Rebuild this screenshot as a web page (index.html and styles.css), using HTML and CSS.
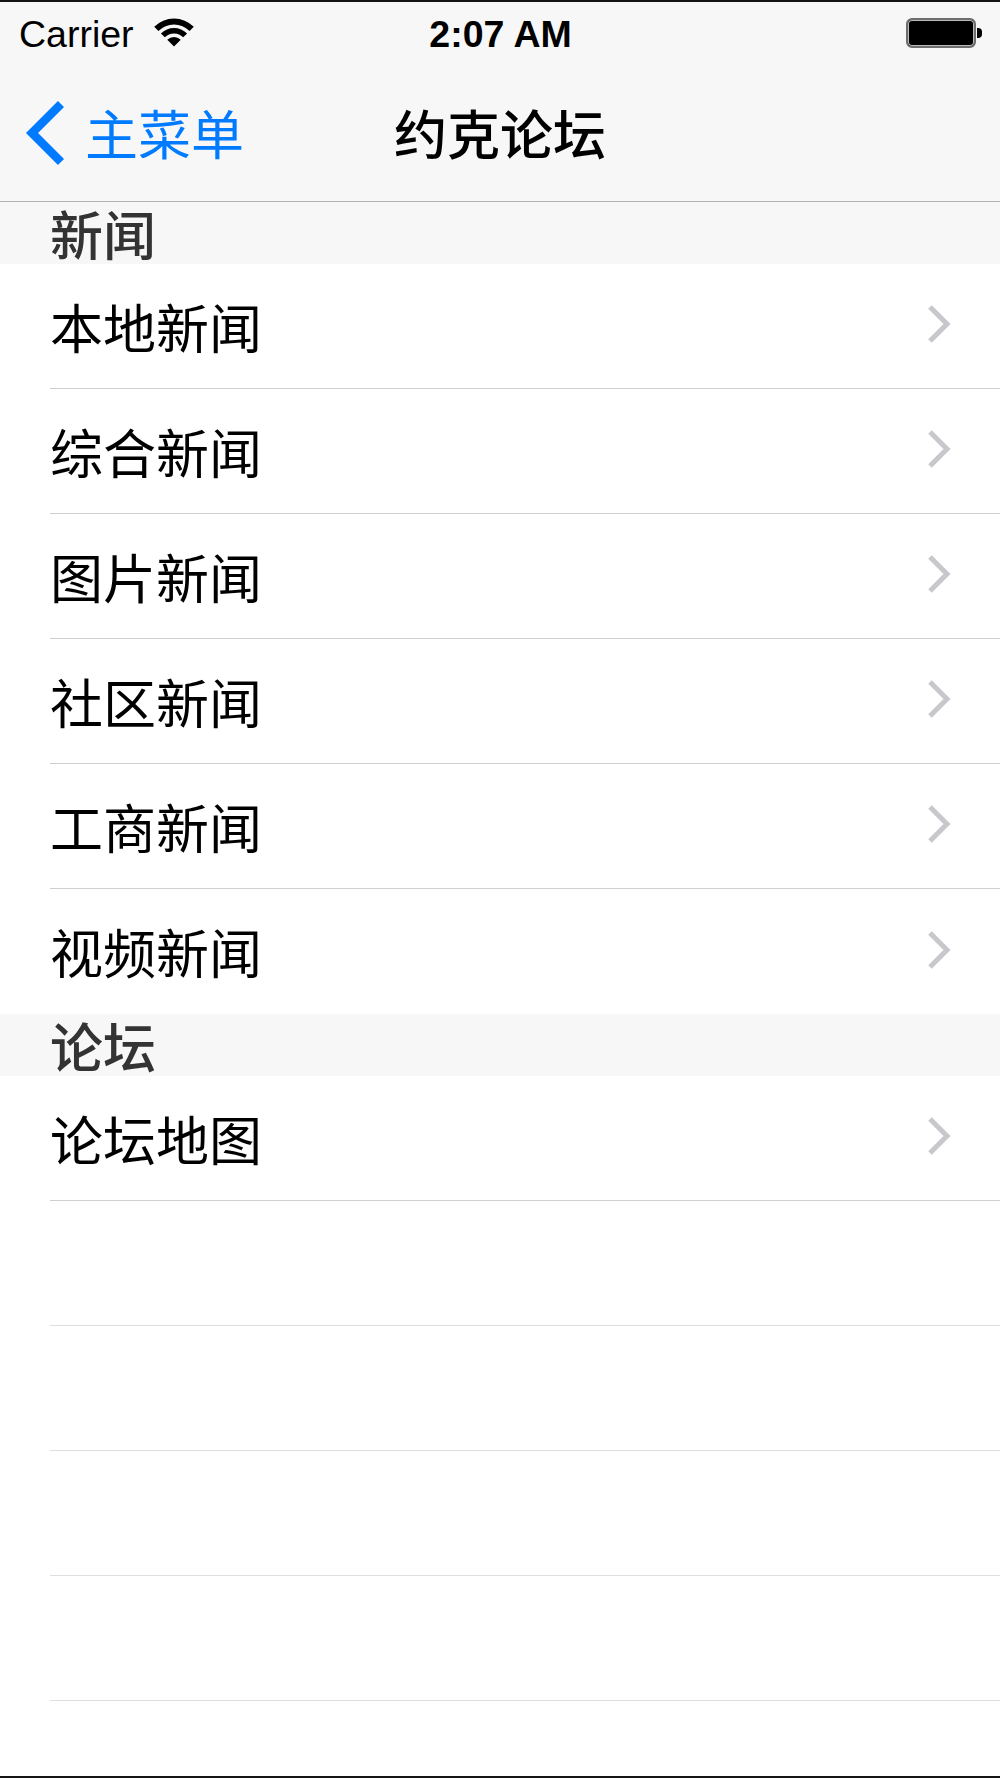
FILE: index.html
```html
<!DOCTYPE html>
<html lang="zh-CN">
<head>
    <meta charset="UTF-8">
    <meta name="viewport" content="width=device-width, initial-scale=1.0">
    <title>约克论坛</title>
    <link rel="stylesheet" href="styles.css">
</head>
<body>
    <div class="screen">
        <div class="status-bar">
            <div class="status-left">
                <span class="carrier">Carrier</span>
                <svg class="wifi" width="40" height="29" viewBox="0 0 40 29">
                    <path d="M0.2,8.7 A28,28 0 0 1 39.8,8.7 L35.56,12.94 A22,22 0 0 0 4.44,12.94 Z"/>
                    <path d="M6.92,15.42 A18.5,18.5 0 0 1 33.08,15.42 L29.19,19.31 A13,13 0 0 0 10.81,19.31 Z"/>
                    <path d="M20,28.5 L13.28,21.78 A9.5,9.5 0 0 1 26.72,21.78 Z"/>
                </svg>
            </div>
            <div class="clock">2:07 AM</div>
            <div class="status-right">
                <div class="battery"></div>
                <div class="battery-tip"></div>
            </div>
        </div>

        <div class="nav-bar">
            <div class="back">
                <svg class="back-arrow" width="44" height="68" viewBox="0 0 44 68">
                    <polyline points="37,5 8,34 37,63"/>
                </svg>
                <span>主菜单</span>
            </div>
            <div class="nav-title">约克论坛</div>
            <div></div>
        </div>

        <div class="section-header">新闻</div>
        <div class="cell">本地新闻<svg class="disclosure" viewBox="0 0 26 40"><polyline points="4,3 21,20 4,37"/></svg></div>
        <div class="cell">综合新闻<svg class="disclosure" viewBox="0 0 26 40"><polyline points="4,3 21,20 4,37"/></svg></div>
        <div class="cell">图片新闻<svg class="disclosure" viewBox="0 0 26 40"><polyline points="4,3 21,20 4,37"/></svg></div>
        <div class="cell">社区新闻<svg class="disclosure" viewBox="0 0 26 40"><polyline points="4,3 21,20 4,37"/></svg></div>
        <div class="cell">工商新闻<svg class="disclosure" viewBox="0 0 26 40"><polyline points="4,3 21,20 4,37"/></svg></div>
        <div class="cell last">视频新闻<svg class="disclosure" viewBox="0 0 26 40"><polyline points="4,3 21,20 4,37"/></svg></div>

        <div class="section-header">论坛</div>
        <div class="cell">论坛地图<svg class="disclosure" viewBox="0 0 26 40"><polyline points="4,3 21,20 4,37"/></svg></div>
        <div class="cell empty"></div>
        <div class="cell empty"></div>
        <div class="cell empty"></div>
        <div class="cell empty"></div>
        <div class="filler"></div>
    </div>
</body>
</html>
```

FILE: styles.css
```css
body {
    margin: 0;
    background: #fff;
    font-family: "Noto Sans CJK SC", "Liberation Sans", sans-serif;
}
.screen {
    width: 1000px;
    height: 1778px;
    box-sizing: border-box;
    display: flex;
    flex-direction: column;
    border-top: 2px solid #151515;
    border-bottom: 2px solid #151515;
    overflow: hidden;
}
.status-bar {
    height: 62px;
    flex: none;
    box-sizing: border-box;
    background: #f7f7f7;
    display: grid;
    grid-template-columns: 1fr auto 1fr;
    align-items: center;
    padding: 3px 18px 0 19px;
    font-family: "Liberation Sans", Arial, sans-serif;
    font-size: 37.5px;
    color: #000;
}
.status-left {
    display: flex;
    align-items: center;
    gap: 20px;
}
.carrier {
    line-height: 1;
}
.wifi {
    fill: #000;
    margin-top: -4px;
}
.clock {
    font-weight: bold;
    line-height: 1;
}
.status-right {
    display: flex;
    align-items: center;
    justify-content: flex-end;
    margin-top: -3px;
}
.battery {
    width: 70px;
    height: 30px;
    box-sizing: border-box;
    background: #000;
    border: 2px solid #6e6e6e;
    border-radius: 6px;
    box-shadow: inset 0 0 0 1px #bbb;
}
.battery-tip {
    width: 5px;
    height: 10px;
    background: #000;
    border-radius: 0 4px 4px 0;
    margin-left: 1px;
}
.nav-bar {
    height: 138px;
    flex: none;
    box-sizing: border-box;
    background: #f7f7f7;
    border-bottom: 1px solid #b2b2b2;
    display: grid;
    grid-template-columns: 1fr auto 1fr;
    align-items: center;
    padding: 0 24px;
}
.back {
    display: flex;
    align-items: center;
    gap: 17px;
    color: #007aff;
    font-size: 53px;
    line-height: 1;
}
.back-arrow {
    fill: none;
    stroke: #007aff;
    stroke-width: 8.5;
}
.nav-title {
    font-size: 53px;
    font-weight: 500;
    line-height: 1;
    color: #000;
}
.section-header {
    height: 62px;
    flex: none;
    background: #f7f7f7;
    display: flex;
    align-items: center;
    padding-left: 50px;
    font-size: 53px;
    font-weight: 500;
    color: #333;
    line-height: 1;
}
.cell {
    height: 125px;
    flex: none;
    box-sizing: border-box;
    margin-left: 50px;
    padding-right: 48px;
    border-bottom: 1px solid #cfcfcf;
    display: flex;
    align-items: center;
    justify-content: space-between;
    font-size: 53px;
    line-height: 1;
    color: #000;
}
.cell.last {
    border-bottom: none;
}
.cell.empty {
    border-bottom-color: #dedede;
}
.disclosure {
    width: 26px;
    height: 40px;
    fill: none;
    stroke: #c7c7cc;
    stroke-width: 5;
    margin-top: -4px;
}
.filler {
    flex: 1;
}
```
